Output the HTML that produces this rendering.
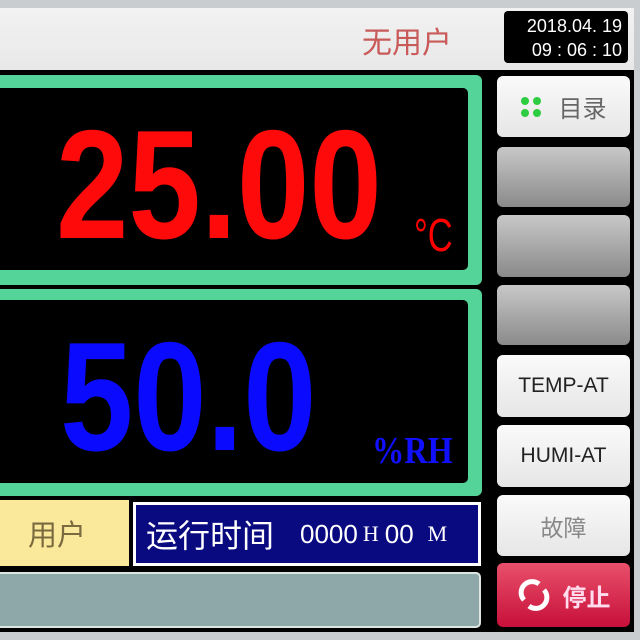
<!DOCTYPE html>
<html><head><meta charset="utf-8"><style>
*{margin:0;padding:0;box-sizing:border-box}
body{width:640px;height:640px;overflow:hidden;background:#000;position:relative;font-family:"Liberation Sans","Noto Sans CJK SC",sans-serif}
.a{position:absolute}
.btn{position:absolute;left:497px;width:133px;border-radius:6px;display:flex;align-items:center;justify-content:center;font-size:21px;color:#222}
.w{background:linear-gradient(#fafafa,#e6e6e6)}
.g{background:linear-gradient(#c8c8c8,#8a8a8a)}
</style></head><body>
<div class="a" style="left:0;top:0;width:640px;height:8px;background:#c9cdcf"></div>
<div class="a" style="left:634px;top:0;width:6px;height:640px;background:#c9cdcf"></div>
<div class="a" style="left:0;top:632px;width:640px;height:8px;background:#c9cdcf"></div>
<div class="a" style="left:0;top:8px;width:634px;height:62px;background:linear-gradient(#f2f2f2,#e8e8e8)"></div>
<div class="a" style="left:362px;top:18px;font-size:30px;color:#c85a5a">无用户</div>
<div class="a" style="left:504px;top:11px;width:124px;height:52px;background:#000;border-radius:4px;color:#fff;font-size:18px;text-align:right;padding:3px 6px 0 0;line-height:24px">2018.04. 19<br>09 : 06 : 10</div>

<div class="a" style="left:0;top:75px;width:482px;height:210px;background:#55d49a;border-radius:0 6px 6px 0"></div>
<div class="a" style="left:0;top:88px;width:468px;height:182px;background:#000;border-radius:0 5px 5px 0"></div>
<div class="a" style="left:56px;top:107px;font-size:155px;font-weight:bold;color:#ff0a0a;transform:scaleX(0.84);transform-origin:left top;line-height:155px">25.00</div>
<div class="a" style="left:414px;top:208px;font-size:46px;color:#f00;transform:scaleX(0.75);transform-origin:left top">°C</div>

<div class="a" style="left:0;top:289px;width:482px;height:207px;background:#55d49a;border-radius:0 6px 6px 0"></div>
<div class="a" style="left:0;top:300px;width:468px;height:183px;background:#000;border-radius:0 5px 5px 0"></div>
<div class="a" style="left:60px;top:319px;font-size:155px;font-weight:bold;color:#0a0aff;transform:scaleX(0.85);transform-origin:left top;line-height:155px">50.0</div>
<div class="a" style="left:372px;top:429px;font-size:38px;color:#1010ff;font-family:'Liberation Serif',serif;font-weight:bold;transform:scaleX(0.85);transform-origin:left top">%RH</div>

<div class="a" style="left:0;top:500px;width:129px;height:66px;background:#fbe99b;color:#7a6a40;font-size:29px;padding:12px 0 0 28px">用户</div>
<div class="a" style="left:133px;top:502px;width:348px;height:64px;background:#fff;padding:3px"><div style="width:100%;height:100%;background:#0a0a80;color:#fff;display:flex;align-items:center;padding-left:10px;white-space:nowrap"><span style="font-size:32px">运行时间</span><span style="font-size:26px;margin-left:26px">0000</span><span style="font-size:22px;font-family:'Liberation Serif',serif;margin-left:5px">H</span><span style="font-size:26px;margin-left:6px">00</span><span style="font-size:22px;font-family:'Liberation Serif',serif;margin-left:14px">M</span></div></div>
<div class="a" style="left:0;top:572px;width:481px;height:56px;background:#8ea8aa;border:2px solid #dfe5e0;border-left:none;border-radius:0 5px 5px 0"></div>

<div class="btn w" style="top:76px;height:61px;color:#666;font-size:24px"><span style="display:inline-grid;grid-template-columns:8px 8px;gap:4px;margin-right:18px"><i style="width:8px;height:8px;border-radius:50%;background:#2ecc40"></i><i style="width:8px;height:8px;border-radius:50%;background:#2ecc40"></i><i style="width:8px;height:8px;border-radius:50%;background:#2ecc40"></i><i style="width:8px;height:8px;border-radius:50%;background:#2ecc40"></i></span>目录</div>
<div class="btn g" style="top:147px;height:60px"></div>
<div class="btn g" style="top:215px;height:62px"></div>
<div class="btn g" style="top:285px;height:60px"></div>
<div class="btn w" style="top:355px;height:62px">TEMP-AT</div>
<div class="btn w" style="top:425px;height:62px">HUMI-AT</div>
<div class="btn w" style="top:495px;height:61px;color:#888;font-size:23px">故障</div>
<div class="btn" style="top:563px;height:64px;background:linear-gradient(#e8506a,#c8103a);color:#fde;font-size:24px;font-weight:bold"><svg width="34" height="34" viewBox="0 0 34 34" style="margin-right:12px"><path d="M7 22 A11 11 0 0 1 22 6" fill="none" stroke="#fff" stroke-width="5"/><path d="M27 12 A11 11 0 0 1 12 28" fill="none" stroke="#fff" stroke-width="5"/></svg>停止</div>
</body></html>
